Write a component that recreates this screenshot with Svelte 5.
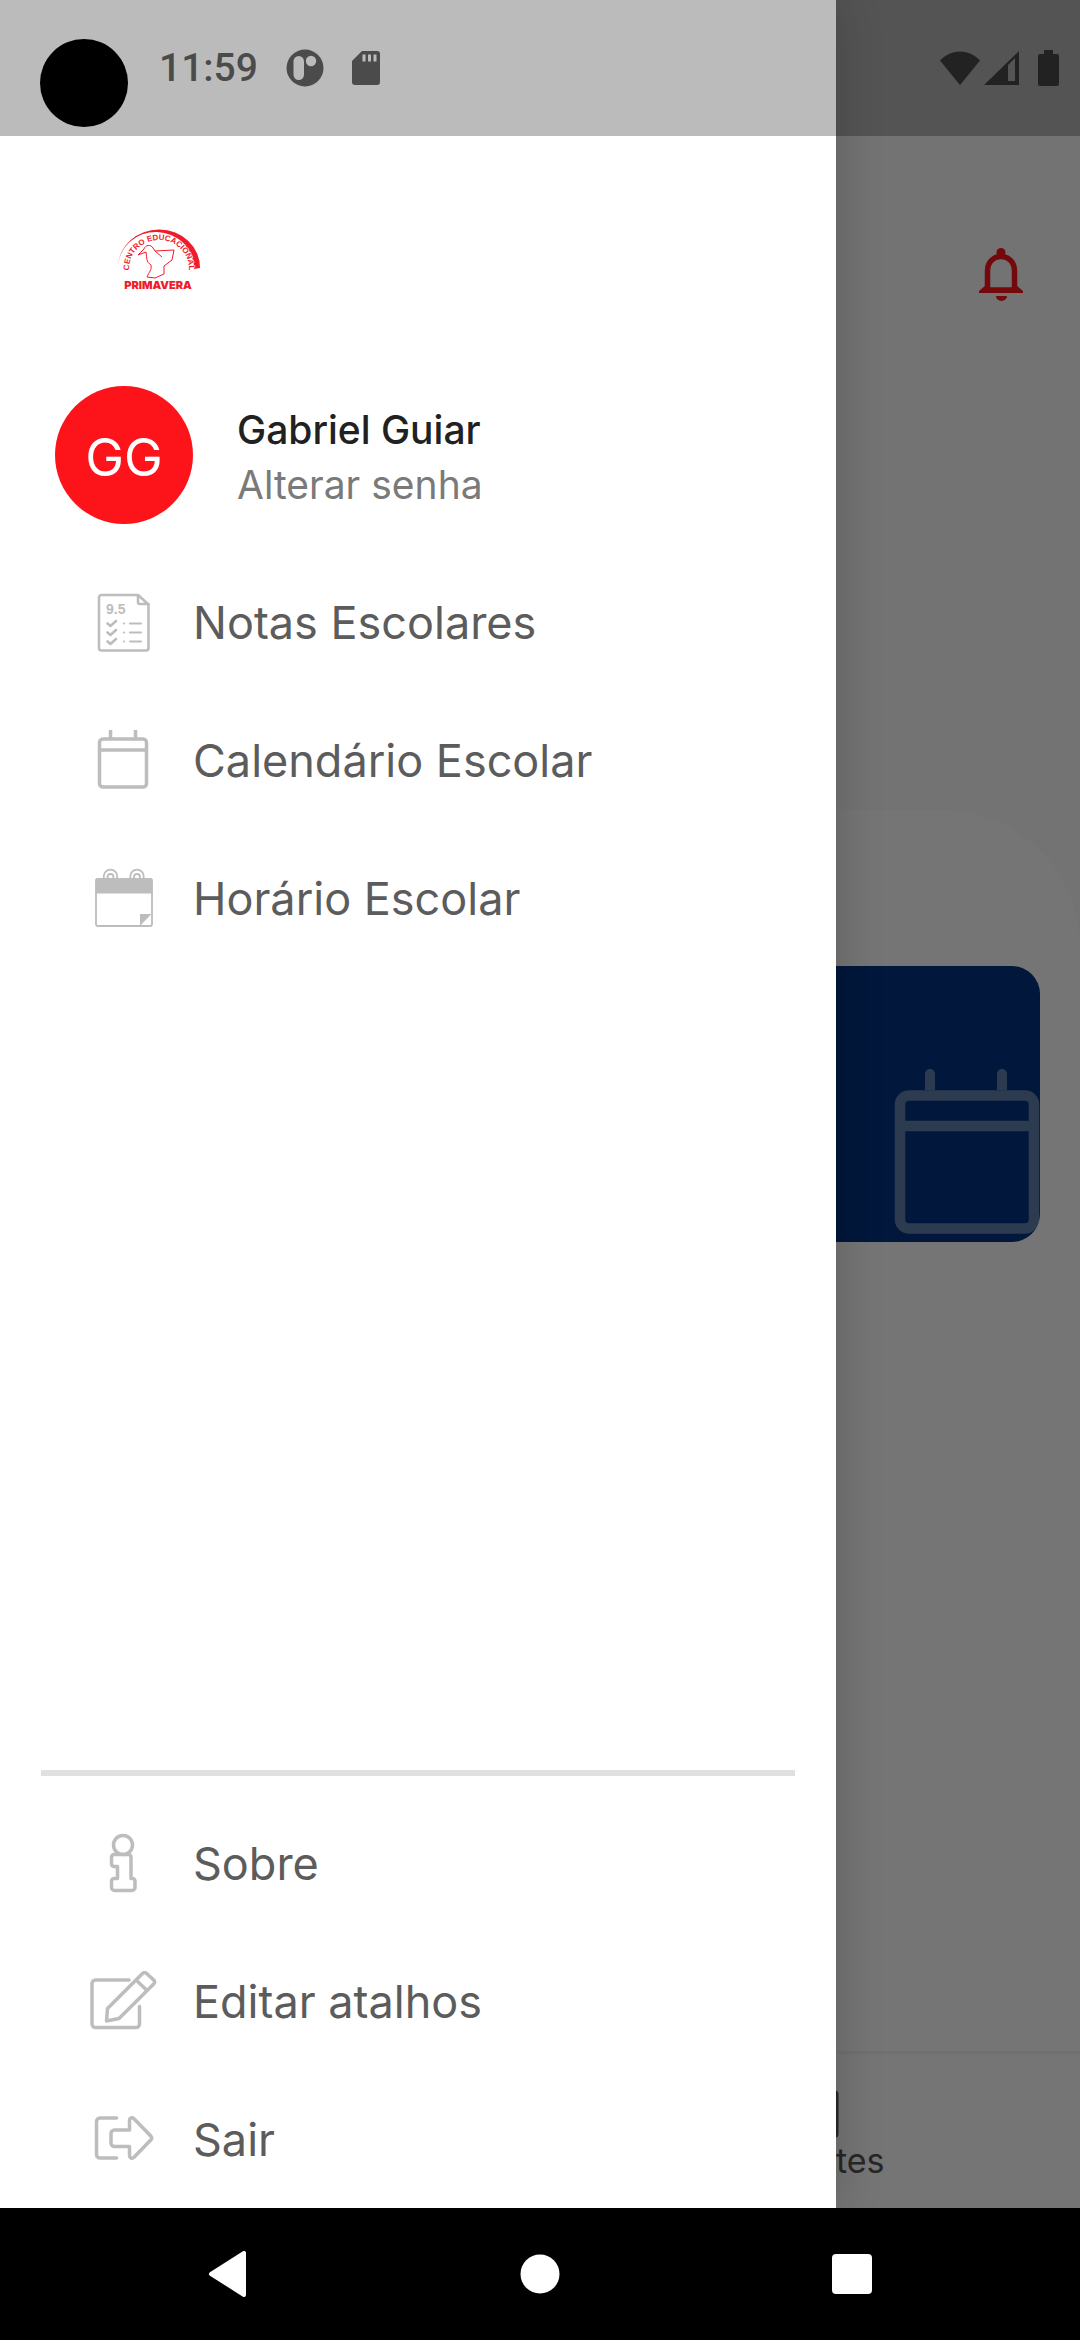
<script>
  let user = { name: 'Gabriel Guiar', initials: 'GG' }

  let mainMenu = [
    { id: 'notas', label: 'Notas Escolares' },
    { id: 'calendario', label: 'Calendário Escolar' },
    { id: 'horario', label: 'Horário Escolar' },
  ]

  let footerMenu = [
    { id: 'sobre', label: 'Sobre' },
    { id: 'editar', label: 'Editar atalhos' },
    { id: 'sair', label: 'Sair' },
  ]
</script>

<svelte:head>
  <title>Centro Educacional Primavera</title>
</svelte:head>

{#snippet menuIcon(id)}
  <svg class="menu-icon" viewBox="0 0 84 60" fill="none" stroke="currentColor" stroke-width="3.500" stroke-linecap="round" stroke-linejoin="round" aria-hidden="true">
    {#if id === 'notas'}
      <g stroke-width="2.600">
        <path d="M57 3H20.500a2.500 2.500 0 0 0-2.500 2.500V56a2.500 2.500 0 0 0 2.500 2.500H65a2.500 2.500 0 0 0 2.500-2.500V12.500L57 3z" />
        <path d="M57 3.500V10a2 2 0 0 0 2 2h8.500" />
        <path d="M26.500 31.500l3 2.500 5.500-5M26.500 40.500l3 2.500 5.500-5M26.500 49.500l3 2.500 5.500-5" />
        <path d="M43 31.500h.2M49 31.500h11M43 40.500h.2M49 40.500h11M43 49.500h.2M49 49.500h11" stroke-width="2" />
      </g>
      <text class="grade" x="25" y="22">9.5</text>
    {:else if id === 'calendario'}
      <rect x="18.500" y="9" width="47" height="48" rx="3.500" />
      <path d="M19 20h46M29.500 0v8M54.500 0v8" stroke-linecap="butt" />
    {:else if id === 'horario'}
      <g stroke-width="1.800">
        <circle cx="29.500" cy="8.500" r="6.800" />
        <circle cx="29.500" cy="9" r="3" />
        <circle cx="56" cy="8.500" r="6.800" />
        <circle cx="56" cy="9" r="3" />
        <rect x="15" y="11" width="56" height="47" rx="2" />
      </g>
      <path d="M16 10h54a1.500 1.500 0 0 1 1.500 1.500v14h-57v-14A1.500 1.500 0 0 1 16 10z" fill="currentColor" stroke="none" />
      <path d="M59 57V46h11.500L59 58z" fill="currentColor" stroke="none" />
    {:else if id === 'sobre'}
      <circle cx="42" cy="12" r="9.500" />
      <path d="M33 21.500h14.500A2.500 2.500 0 0 1 50 24v21.500h1.500A2.500 2.500 0 0 1 54 48v6.500a3 3 0 0 1-3 3H33.500a3 3 0 0 1-3-3V48a2.500 2.500 0 0 1 2.500-2.500h3.500v-12H33a2.500 2.500 0 0 1-2.500-2.500v-7a2.500 2.500 0 0 1 2.500-2.500z" />
    {:else if id === 'editar'}
      <path d="M48 9H14.500A3.500 3.500 0 0 0 11 12.500V53a3.500 3.500 0 0 0 3.500 3.500H55a3.500 3.500 0 0 0 3.500-3.500V35.500" />
      <path d="M25.500 50l1-12.500L61.500 2.500a3 3 0 0 1 4.200 0l7 6.500a3 3 0 0 1 0 4L38 47.500 25.500 50zM55.500 9.500l9.500 9" />
    {:else if id === 'sair'}
      <path d="M35.500 9H19a3.500 3.500 0 0 0-3.500 3.500v33A3.500 3.500 0 0 0 19 49h16.500" />
      <path d="M33.500 21H48.500V11.500c0-2.600 2.500-3.500 4.500-1.700L70 27.300c1 1.200 1 2.200 0 3.400L53 48.200c-2 1.800-4.500.9-4.500-1.700V37.500h-15a3.500 3.500 0 0 1-3.500-3.500v-9.500a3.500 3.500 0 0 1 3.500-3.500z" />
    {/if}
  </svg>
{/snippet}

{#snippet menuList(items)}
  <ul class="menu">
    {#each items as item (item.id)}
      <li>
        <a class="menu-item" href={'#' + item.id}>
          {@render menuIcon(item.id)}
          <span>{item.label}</span>
        </a>
      </li>
    {/each}
  </ul>
{/snippet}

<div class="screen">
  <div class="app">
    <main class="home">
      <header class="home-header">
        <button class="bell" aria-label="Notificações">
          <svg viewBox="0 0 44 54" width="44" height="54">
            <circle cx="22" cy="4.500" r="4.500" fill="currentColor" />
            <path d="M8.500 42V23c0-9 6-14.500 13.500-14.500S35.500 14 35.500 23v19z" fill="none" stroke="currentColor" stroke-width="5.500" />
            <path d="M0 45v-2l7-6v3h30v-3l7 6v2zM17 48h11a5.500 5 0 0 1-11 0z" fill="currentColor" />
          </svg>
        </button>
      </header>

      <section class="sheet">
        <a class="shortcut" href="#calendario" aria-label="Calendário">
          <svg viewBox="0 0 146 166" width="146" height="166" fill="none" stroke="currentColor" stroke-width="10.500">
            <path d="M31 21V5a5 5 0 0 1 10 0v16zM103 21V5a5 5 0 0 1 10 0v16z" fill="currentColor" stroke="none" />
            <path d="M15 26.500h116a9 9 0 0 1 9 9v115a9 9 0 0 1-9 9H15a9 9 0 0 1-9-9v-115a9 9 0 0 1 9-9zM11 57h124" />
          </svg>
        </a>
      </section>

      <nav class="tabs">
        <a href="#inicio" aria-label="Início">
          <svg viewBox="0 0 58 48" width="58" height="48" fill="none" stroke="currentColor" stroke-width="3">
            <path d="M6 46V20L29 3l23 17v26z" />
          </svg>
        </a>
        <a href="#recentes">
          <svg viewBox="0 0 58 48" width="58" height="48" fill="none" stroke="currentColor" stroke-width="3">
            <rect x="2" y="2" width="54" height="44" rx="2" />
          </svg>
          <span>Recentes</span>
        </a>
      </nav>
    </main>

    <div class="scrim"></div>

    <aside class="drawer">
      <div class="brand">
        <svg viewBox="0 0 84 66" width="84" height="66" role="img" aria-label="Centro Educacional Primavera">
          <defs>
            <path id="brand-arc" d="M11 42a30 29 0 0 1 60 0" />
          </defs>
          <path d="M0 40A41 38 0 0 1 82 41l-6 1A38 36 0 0 0 0 40z" fill="#f01c2c" />
          <text class="brand-ring">
            <textPath href="#brand-arc" startOffset="50%" text-anchor="middle">CENTRO EDUCACIONAL</textPath>
          </text>
          <path d="M20 28l6-6c1-4 7-5 9-1l2 3 19-1-2 10-8 6v8l-9 4-8-1c2-5 5-7 4-12-5-3-4-7-5-13l-8 3M37 24l7 6" fill="none" stroke="#f01c2c" stroke-width="1" />
          <text class="brand-name" x="40" y="62" text-anchor="middle">PRIMAVERA</text>
        </svg>
      </div>

      <div class="profile">
        <div class="avatar">{user.initials}</div>
        <div class="profile-text">
          <strong>{user.name}</strong>
          <a href="#senha">Alterar senha</a>
        </div>
      </div>

      {@render menuList(mainMenu)}

      <div class="drawer-footer">
        <hr />
        {@render menuList(footerMenu)}
      </div>
    </aside>

    <div class="status-bar">
      <span class="camera"></span>
      <div class="status-left">
        <time>11:59</time>
        <svg viewBox="0 0 38 38" width="38" height="38">
          <circle cx="19" cy="19" r="18.500" fill="currentColor" />
          <rect x="7.500" y="7" width="10.500" height="24" rx="5.200" fill="#bbb" />
          <circle cx="25" cy="12" r="5.200" fill="#bbb" />
        </svg>
        <svg viewBox="0 0 28 36" width="28" height="36">
          <path d="M10 1h15a3 3 0 0 1 3 3v28a3 3 0 0 1-3 3H3a3 3 0 0 1-3-3V11z" fill="currentColor" />
          <path d="M12 4.500v7M17.500 4.500v7M23 4.500v7" stroke="#bbb" stroke-width="3" />
        </svg>
      </div>
      <div class="status-right">
        <svg viewBox="0 0 42 36" width="42" height="36">
          <path d="M21 35L1 10.500C13-1.500 29-1.500 41 10.500z" fill="currentColor" />
        </svg>
        <svg viewBox="0 0 35 36" width="35" height="36">
          <path d="M0 35L35 1v34zM24 15v16h7V8z" fill="currentColor" fill-rule="evenodd" />
        </svg>
        <svg class="battery" viewBox="0 0 21 36" width="21" height="36">
          <path d="M6 0h9v4h4a2 2 0 0 1 2 2v28a2 2 0 0 1-2 2H2a2 2 0 0 1-2-2V6a2 2 0 0 1 2-2h4z" fill="currentColor" />
        </svg>
      </div>
    </div>
  </div>

  <nav class="system-nav">
    <button aria-label="Voltar">
      <svg viewBox="0 0 40 46" width="40" height="46"><path d="M36 2v42L3 23z" fill="#fff" stroke="#fff" stroke-width="4" stroke-linejoin="round" /></svg>
    </button>
    <button aria-label="Início">
      <svg viewBox="0 0 40 40" width="40" height="40"><circle cx="20" cy="20" r="19.500" fill="#fff" /></svg>
    </button>
    <button aria-label="Aplicativos recentes">
      <svg viewBox="0 0 40 40" width="40" height="40"><rect width="40" height="40" rx="4" fill="#fff" /></svg>
    </button>
  </nav>
</div>

<style>
  :global(body) {
    margin: 0;
    background: #000;
  }

  .screen {
    display: flex;
    flex-direction: column;
    min-height: 100vh;
    font-family: Inter, 'Liberation Sans', sans-serif;
  }

  .screen a {
    color: inherit;
    text-decoration: none;
  }

  button {
    display: flex;
    padding: 0;
    border: none;
    background: none;
    color: inherit;
    cursor: pointer;
  }

  svg {
    display: block;
    flex-shrink: 0;
  }

  /* home, scrim, drawer and status bar are stacked in one cell */
  .app {
    flex: 1;
    display: grid;
    overflow: hidden;
  }

  .app > * {
    grid-area: 1 / 1;
  }

  .home {
    display: flex;
    flex-direction: column;
    background: #fbfbfb;
  }

  .home-header {
    display: flex;
    justify-content: flex-end;
    box-sizing: border-box;
    height: 810px;
    padding: 248px 57px 0 0;
    color: #fd141b;
  }

  .sheet {
    flex: 1;
    padding: 156px 40px 0;
    background: #fff;
    border-radius: 0 138px 0 0;
  }

  .shortcut {
    display: flex;
    justify-content: flex-end;
    align-items: flex-end;
    box-sizing: border-box;
    height: 276px;
    padding-bottom: 7px;
    border-radius: 28px;
    background: #043480;
    overflow: hidden;
  }

  .shortcut svg {
    color: rgba(255, 255, 255, 0.38);
  }

  .tabs {
    display: flex;
    box-sizing: border-box;
    height: 157px;
    padding-top: 36px;
    border-top: 3px solid #f4f4f4;
    background: #fff;
    color: #555;
    font-size: 34px;
    line-height: 46px;
  }

  .tabs a {
    flex: 1;
    display: flex;
    flex-direction: column;
    align-items: center;
  }

  .scrim {
    background: rgba(0, 0, 0, 0.54);
  }

  .drawer {
    display: flex;
    flex-direction: column;
    box-sizing: border-box;
    width: 836px;
    max-width: 90%;
    padding-top: 136px;
    background: #fff;
    box-shadow: 0 0 44px rgba(0, 0, 0, 0.2);
  }

  .brand {
    padding: 91px 118px 93px;
  }

  .brand-ring {
    font: 700 8px 'Liberation Sans', sans-serif;
    fill: #f01c2c;
    stroke: #fff;
    stroke-width: 1px;
    paint-order: stroke;
  }

  .brand-name {
    font: 900 11px Inter, sans-serif;
    fill: #f01c2c;
  }

  .profile {
    display: flex;
    align-items: center;
    gap: 44px;
    padding: 0 55px 29px;
  }

  .avatar {
    display: flex;
    align-items: center;
    justify-content: center;
    box-sizing: border-box;
    width: 138px;
    height: 138px;
    padding-top: 4px;
    border-radius: 50%;
    background: #fd141b;
    color: #fff;
    font-size: 52px;
  }

  .profile-text {
    display: flex;
    flex-direction: column;
    padding-top: 4px;
    font-size: 39px;
    line-height: 55px;
    color: #212121;
  }

  .profile-text strong {
    font-weight: 500;
  }

  .screen .profile-text a {
    color: #7a7a7a;
  }

  .menu {
    margin: 0;
    padding: 0;
    list-style: none;
  }

  .menu-item {
    display: flex;
    align-items: center;
    gap: 28px;
    height: 138px;
    padding-left: 81px;
    font-size: 45px;
  }

  .screen .menu-item {
    color: #5c5c5c;
  }

  .menu-icon {
    width: 84px;
    height: 60px;
    color: #bdbdbd;
  }

  .grade {
    font: 700 14px 'Liberation Sans', sans-serif;
    fill: currentColor;
    stroke: none;
  }

  .drawer-footer {
    margin-top: auto;
  }

  hr {
    height: 6px;
    margin: 0 41px 18px;
    border: none;
    background: #e0e0e0;
  }

  .status-bar {
    position: relative;
    display: flex;
    align-items: center;
    justify-content: space-between;
    align-self: start;
    box-sizing: border-box;
    height: 136px;
    padding: 0 21px 0 159px;
    background: rgba(0, 0, 0, 0.267);
  }

  .camera {
    position: absolute;
    top: 39px;
    left: 40px;
    width: 88px;
    height: 88px;
    border-radius: 50%;
    background: #000;
  }

  .status-left {
    display: flex;
    align-items: center;
    gap: 28px;
    color: #4b4b4b;
    font: 500 39px Roboto, sans-serif;
  }

  .status-right {
    display: flex;
    align-items: center;
    gap: 3px;
    color: #222;
  }

  .battery {
    margin-left: 16px;
  }

  .system-nav {
    display: flex;
    align-items: center;
    justify-content: space-between;
    height: 132px;
    padding: 0 208px;
    background: #000;
  }
</style>
